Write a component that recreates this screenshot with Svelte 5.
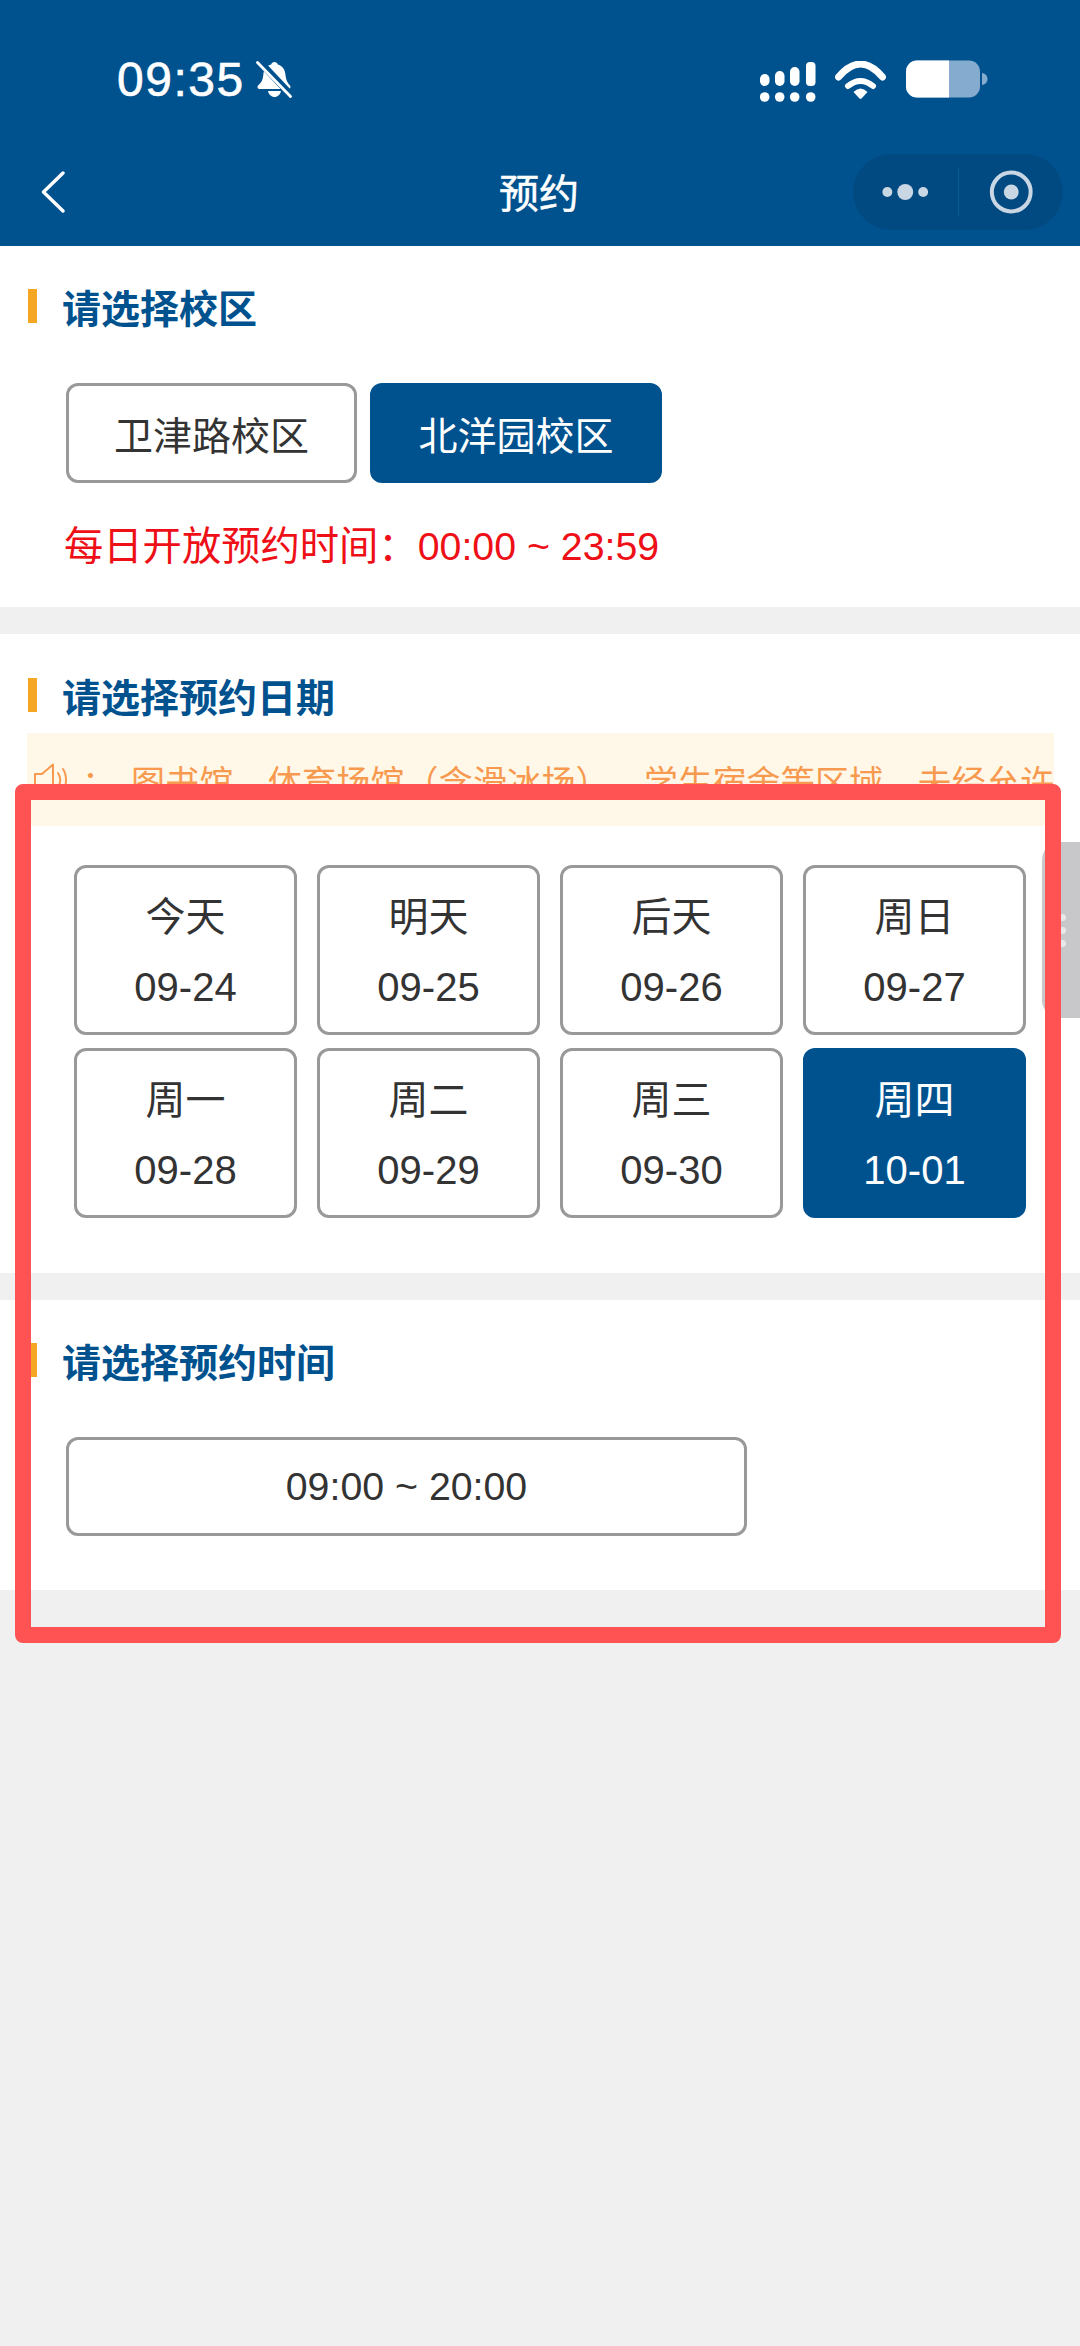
<script>
  const days = [
    { label: '今天', date: '09-24' },
    { label: '明天', date: '09-25' },
    { label: '后天', date: '09-26' },
    { label: '周日', date: '09-27' },
    { label: '周一', date: '09-28' },
    { label: '周二', date: '09-29' },
    { label: '周三', date: '09-30' },
    { label: '周四', date: '10-01', active: true }
  ];
</script>

<div class="page">
  <header class="header">
    <div class="status">
      <span class="time">09:35</span>
      <svg class="bell" width="36" height="38" viewBox="0 0 36 38" aria-hidden="true">
        <path fill="#fff" d="M18.500 2c1.600 0 3 1.100 3.300 2.600 4.700 1.300 7.200 5.100 7.700 10.400.4 4.500 1.700 7.700 4.300 10.200 1.300 1.300.6 3.800-1.600 3.800H4c-2.500 0-3.200-2.500-1.700-3.800 2.900-2.500 4.700-5.600 5-10.200.4-5.600 3.200-9.300 7.900-10.400.3-1.500 1.700-2.600 3.300-2.600z"/>
        <path fill="#fff" d="M12 31h13c-.7 3.600-3.300 6-6.500 6S12.700 34.600 12 31z"/>
        <path d="M3 1l33 35" stroke="#00528f" stroke-width="7"/>
        <path d="M1.500 2.500L34.500 36.500" stroke="#fff" stroke-width="2.800" stroke-linecap="round"/>
      </svg>
      <svg class="signal" width="56" height="40" viewBox="0 0 56 40" aria-hidden="true">
        <g fill="#fff">
          <rect x="0" y="12" width="9.500" height="12" rx="4.700"/>
          <rect x="15" y="9" width="9.500" height="15" rx="4.700"/>
          <rect x="30" y="5" width="9.500" height="19" rx="4.700"/>
          <rect x="46" y="0" width="9.500" height="24" rx="4"/>
          <circle cx="4.700" cy="35" r="4.800"/>
          <circle cx="19.700" cy="35" r="4.800"/>
          <circle cx="34.700" cy="35" r="4.800"/>
          <circle cx="50.700" cy="35" r="4.800"/>
        </g>
      </svg>
      <svg class="wifi" width="51" height="38" viewBox="0 0 51 38" aria-hidden="true">
        <path d="M3.500 16Q25.500 -10 47.500 16" fill="none" stroke="#fff" stroke-width="7" stroke-linecap="round"/>
        <path d="M13 25Q25.500 15 38 25" fill="none" stroke="#fff" stroke-width="6" stroke-linecap="round"/>
        <path d="M18.500 31Q25.500 24 32.500 31L26.500 37.500Q25.500 38.300 24.500 37.500Z" fill="#fff"/>
      </svg>
      <svg class="battery" width="82" height="38" viewBox="0 0 82 38" aria-hidden="true">
        <rect x="0" y="0.500" width="74" height="37" rx="11" fill="#85abcf"/>
        <path d="M11 .5H43V37.500H11A11 11 0 0 1 0 26.500V11.500A11 11 0 0 1 11 .5z" fill="#fff"/>
        <path d="M76 13c3.500.5 5.500 3 5.500 6s-2 5.500-5.500 6z" fill="#85abcf"/>
      </svg>
    </div>
    <nav class="nav">
      <svg class="back" width="24" height="42" viewBox="0 0 24 42" aria-hidden="true">
        <path d="M22 2L2.500 21 22 40" fill="none" stroke="#fff" stroke-width="3.400" stroke-linecap="round" stroke-linejoin="round"/>
      </svg>
      <h1 class="nav-title">预约</h1>
      <div class="capsule">
        <svg width="105" height="76" viewBox="0 0 105 76" aria-hidden="true">
          <circle cx="34.500" cy="38" r="5" fill="#c9d6e4"/>
          <circle cx="52.500" cy="38" r="8" fill="#c9d6e4"/>
          <circle cx="70.500" cy="38" r="5" fill="#c9d6e4"/>
        </svg>
        <span class="divider"></span>
        <svg width="105" height="76" viewBox="0 0 105 76" aria-hidden="true">
          <circle cx="52.500" cy="38" r="19.500" fill="none" stroke="#c9d6e4" stroke-width="4"/>
          <circle cx="52.500" cy="38" r="7.500" fill="#c9d6e4"/>
        </svg>
      </div>
    </nav>
  </header>

  <section class="section first">
    <div class="title"><span class="bar"></span><h2>请选择校区</h2></div>
    <div class="campuses">
      <button class="option campus">卫津路校区</button>
      <button class="option campus wide active">北洋园校区</button>
    </div>
    <p class="open-time">每日开放预约时间：00:00 ~ 23:59</p>
  </section>

  <section class="section second">
    <div class="title"><span class="bar"></span><h2>请选择预约日期</h2></div>
    <div class="notice">
      <svg width="34" height="36" viewBox="0 0 34 36" aria-hidden="true">
        <path d="M2 12h7L20 2.500v31L9 24H2z" fill="none" stroke="#f79a4f" stroke-width="2" stroke-linejoin="round"/>
        <path d="M25 11c3 4 3 10 0 14M30 7c4 6 4 16 0 22" fill="none" stroke="#f79a4f" stroke-width="2" stroke-linecap="round"/>
      </svg>
      <span class="colon">：</span>
      <span class="notice-text">图书馆、体育场馆（含滑冰场）、学生宿舍等区域，未经允许</span>
    </div>
    <div class="days">
      {#each days as d}
        <button class="option day" class:active={d.active}>
          <span>{d.label}</span>
          <span>{d.date}</span>
        </button>
      {/each}
    </div>
    <div class="handle"><i></i><i></i><i></i></div>
  </section>

  <section class="section third">
    <div class="title"><span class="bar"></span><h2>请选择预约时间</h2></div>
    <button class="option slot">09:00 ~ 20:00</button>
  </section>

  <div class="annotation"></div>
</div>

<style>
  :global(body) {
    margin: 0;
    background: #f0f0f0;
  }
  .page {
    position: relative;
    height: 2346px;
    overflow: hidden;
    background: #f0f0f0;
    font-family: "Liberation Sans", "Noto Sans CJK SC", sans-serif;
    color: #333;
  }
  .header {
    height: 246px;
    background: #00528f;
    color: #fff;
  }
  .status {
    height: 144px;
    padding-top: 16px;
    box-sizing: border-box;
    display: flex;
    align-items: center;
    padding-left: 117px;
  }
  .time {
    font-family: "Liberation Sans", sans-serif;
    font-size: 48px;
    letter-spacing: 1.500px;
    line-height: 1;
    -webkit-text-stroke: 0.6px #fff;
  }
  .bell {
    margin-left: 11px;
    margin-top: -3px;
  }
  .signal {
    margin-left: auto;
    margin-top: 4px;
  }
  .wifi {
    margin-left: 19px;
  }
  .battery {
    margin-left: 20px;
    margin-right: 92px;
    margin-top: -3px;
  }
  .nav {
    position: relative;
    height: 96px;
    display: flex;
    align-items: center;
    justify-content: center;
  }
  .back {
    position: absolute;
    left: 41px;
    top: 27px;
  }
  .nav-title {
    margin: 0;
    font-size: 40px;
    font-weight: 400;
    -webkit-text-stroke: 0.5px #fff;
    line-height: 1;
    margin-top: 4px;
    margin-right: 2px;
  }
  .capsule {
    position: absolute;
    left: 853px;
    top: 10px;
    width: 210px;
    height: 76px;
    border-radius: 38px;
    background: #004a81;
    display: flex;
    align-items: center;
  }
  .divider {
    width: 1px;
    height: 48px;
    background: #0a5a94;
  }
  .section {
    position: relative;
    background: #fff;
    box-sizing: border-box;
  }
  .first {
    height: 361px;
    padding-top: 43px;
    margin-bottom: 27px;
  }
  .second {
    height: 639px;
    padding-top: 44px;
    margin-bottom: 27px;
  }
  .third {
    height: 290px;
    padding-top: 43px;
  }
  .title {
    display: flex;
    align-items: center;
    height: 34px;
    padding-left: 28px;
  }
  .bar {
    width: 9px;
    height: 34px;
    background: #f5a623;
  }
  .title h2 {
    margin: 7px 0 0 25px;
    font-size: 39px;
    line-height: 34px;
    font-weight: 700;
    color: #00528f;
  }
  .option {
    display: block;
    box-sizing: border-box;
    margin: 0;
    padding: 0;
    font: inherit;
    font-size: 39px;
    color: #333;
    background: #fff;
    border: 3px solid #999;
    border-radius: 12px;
  }
  .option.active {
    background: #00528f;
    border-color: #00528f;
    color: #fff;
  }
  .campuses {
    display: flex;
    gap: 13px;
    margin: 60px 0 0 66px;
  }
  .campus {
    width: 291px;
    height: 100px;
  }
  .campus.wide {
    width: 292px;
  }
  .open-time {
    margin: 26px 0 0 64px;
    font-size: 39.300px;
    line-height: 74px;
    color: #ee0f17;
  }
  .notice {
    margin: 21px 26px 0 27px;
    height: 93px;
    padding: 32px 0 0 6px;
    box-sizing: border-box;
    display: flex;
    align-items: flex-start;
    overflow: hidden;
    background: #fff8e8;
    color: #f79a4f;
    font-size: 34px;
    line-height: 36px;
    white-space: nowrap;
    text-spacing-trim: space-all;
  }
  .notice svg {
    flex: none;
    margin-top: -3px;
  }
  .colon {
    margin-left: 15px;
    width: 49px;
    flex: none;
  }
  .notice-text {
    letter-spacing: 0.200px;
  }
  .days {
    display: grid;
    grid-template-columns: repeat(4, 223px);
    grid-auto-rows: 170px;
    column-gap: 20px;
    row-gap: 13px;
    margin: 39px 0 0 74px;
  }
  .day {
    display: flex;
    flex-direction: column;
    align-items: center;
    justify-content: center;
    padding-top: 4px;
    font-size: 40px;
  }
  .day span {
    line-height: 70px;
  }
  .handle {
    position: absolute;
    left: 1042px;
    top: 208px;
    width: 38px;
    height: 176px;
    border-radius: 18px 0 0 18px;
    background: #c8c8ca;
    display: flex;
    flex-direction: column;
    align-items: center;
    justify-content: center;
    gap: 6px;
  }
  .handle i {
    width: 7px;
    height: 7px;
    margin-left: 2px;
    border-radius: 50%;
    background: #e8e8e8;
  }
  .slot {
    width: 681px;
    height: 99px;
    margin: 60px 0 0 66px;
    font-size: 39.300px;
  }
  .annotation {
    position: absolute;
    left: 15px;
    top: 784px;
    width: 1046px;
    height: 859px;
    box-sizing: border-box;
    border: 16px solid #ff5252;
    border-radius: 8px;
  }
</style>
